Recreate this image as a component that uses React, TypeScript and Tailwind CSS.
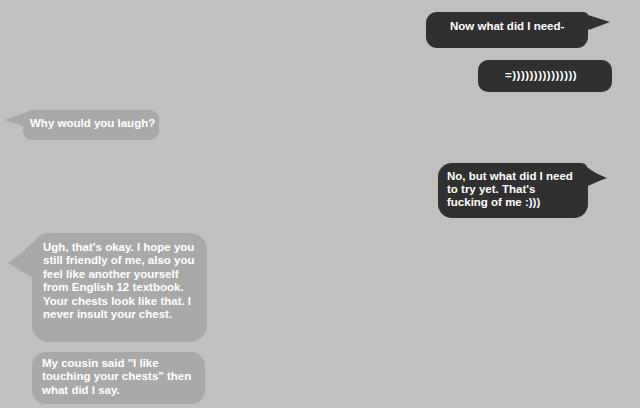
const Tail = ({ d, className, w, h, fill }: { d: string; className: string; w: number; h: number; fill: string }) => (
  <svg className={"absolute " + className} width={w} height={h} viewBox={`0 0 ${w} ${h}`}>
    <path d={d} fill={fill} />
  </svg>
);

const DARK = "#303030";
const GRAY = "#a9a9a9";

const App = () => {
  return (
    <div className="w-[640px] h-[408px] overflow-hidden bg-[#c0c0c0] pt-[12px] flex flex-col text-white font-bold text-[11.5px] leading-[13.4px] [font-family:'Liberation_Sans',Arial,sans-serif]">
      {/* right 1 */}
      <div className="flex justify-end pr-[52px]">
        <div className="relative w-[162px] h-[36px] rounded-[11px] bg-[#303030] pl-[24px] pt-[8px]">
          <Tail
            className="left-[148px] top-0"
            w={36}
            h={24}
            fill={DARK}
            d="M0 0 H9 Q13 0 14 3 L36 10 L16 17.5 L0 18 Z"
          />
          <span className="relative">Now what did I need-</span>
        </div>
      </div>

      {/* right 2 */}
      <div className="flex justify-end pr-[28px] mt-[12px]">
        <div className="w-[134px] h-[32px] rounded-[10px] bg-[#303030] pl-[27px] flex items-center tracking-[0.5px]">
          =)))))))))))))))
        </div>
      </div>

      {/* left 1 */}
      <div className="flex pl-[23px] mt-[18px]">
        <div className="relative w-[136px] h-[30px] rounded-[9px] bg-[#a9a9a9] pl-[7px] flex items-center">
          <Tail
            className="left-[-18px] top-0"
            w={24}
            h={30}
            fill={GRAY}
            d="M24 2 L18 3 Q10 7 1 9 L1 11 Q10 13 18 16 L24 17 Z"
          />
          <span className="relative -mt-[3px]">Why would you laugh?</span>
        </div>
      </div>

      {/* right 3 */}
      <div className="flex justify-end pr-[52px] mt-[23px]">
        <div className="relative w-[150px] h-[55px] rounded-[14px] bg-[#303030] pl-[9px] pt-[7px] leading-[13px]">
          <Tail
            className="left-[136px] top-0"
            w={36}
            h={32}
            fill={DARK}
            d="M0 0 H6 Q12 0 13 4 Q20 10 33 15 Q22 19 14 23 V32 H0 Z"
          />
          <span className="relative">
            No, but what did I need
            <br />
            to try yet. That's
            <br />
            fucking of me :)))
          </span>
        </div>
      </div>

      {/* left 2 */}
      <div className="flex pl-[32px] mt-[15px]">
        <div className="relative w-[175px] h-[109px] rounded-[17px] bg-[#a9a9a9] pl-[11px] pt-[8px]">
          <Tail
            className="left-[-26px] top-[8px]"
            w={32}
            h={40}
            fill={GRAY}
            d="M32 0 L26 2 Q14 14 2 22 Q14 30 26 36 L32 38 Z"
          />
          <span className="relative">
            Ugh, that's okay. I hope you
            <br />
            still friendly of me, also you
            <br />
            feel like another yourself
            <br />
            from English 12 textbook.
            <br />
            Your chests look like that. I
            <br />
            never insult your chest.
          </span>
        </div>
      </div>

      {/* left 3 */}
      <div className="flex pl-[32px] mt-[10px]">
        <div className="w-[173px] h-[52px] rounded-[14px] bg-[#a9a9a9] pl-[10px] pt-[5px]">
          My cousin said "I like
          <br />
          touching your chests" then
          <br />
          what did I say.
        </div>
      </div>
    </div>
  );
};

export default App;
